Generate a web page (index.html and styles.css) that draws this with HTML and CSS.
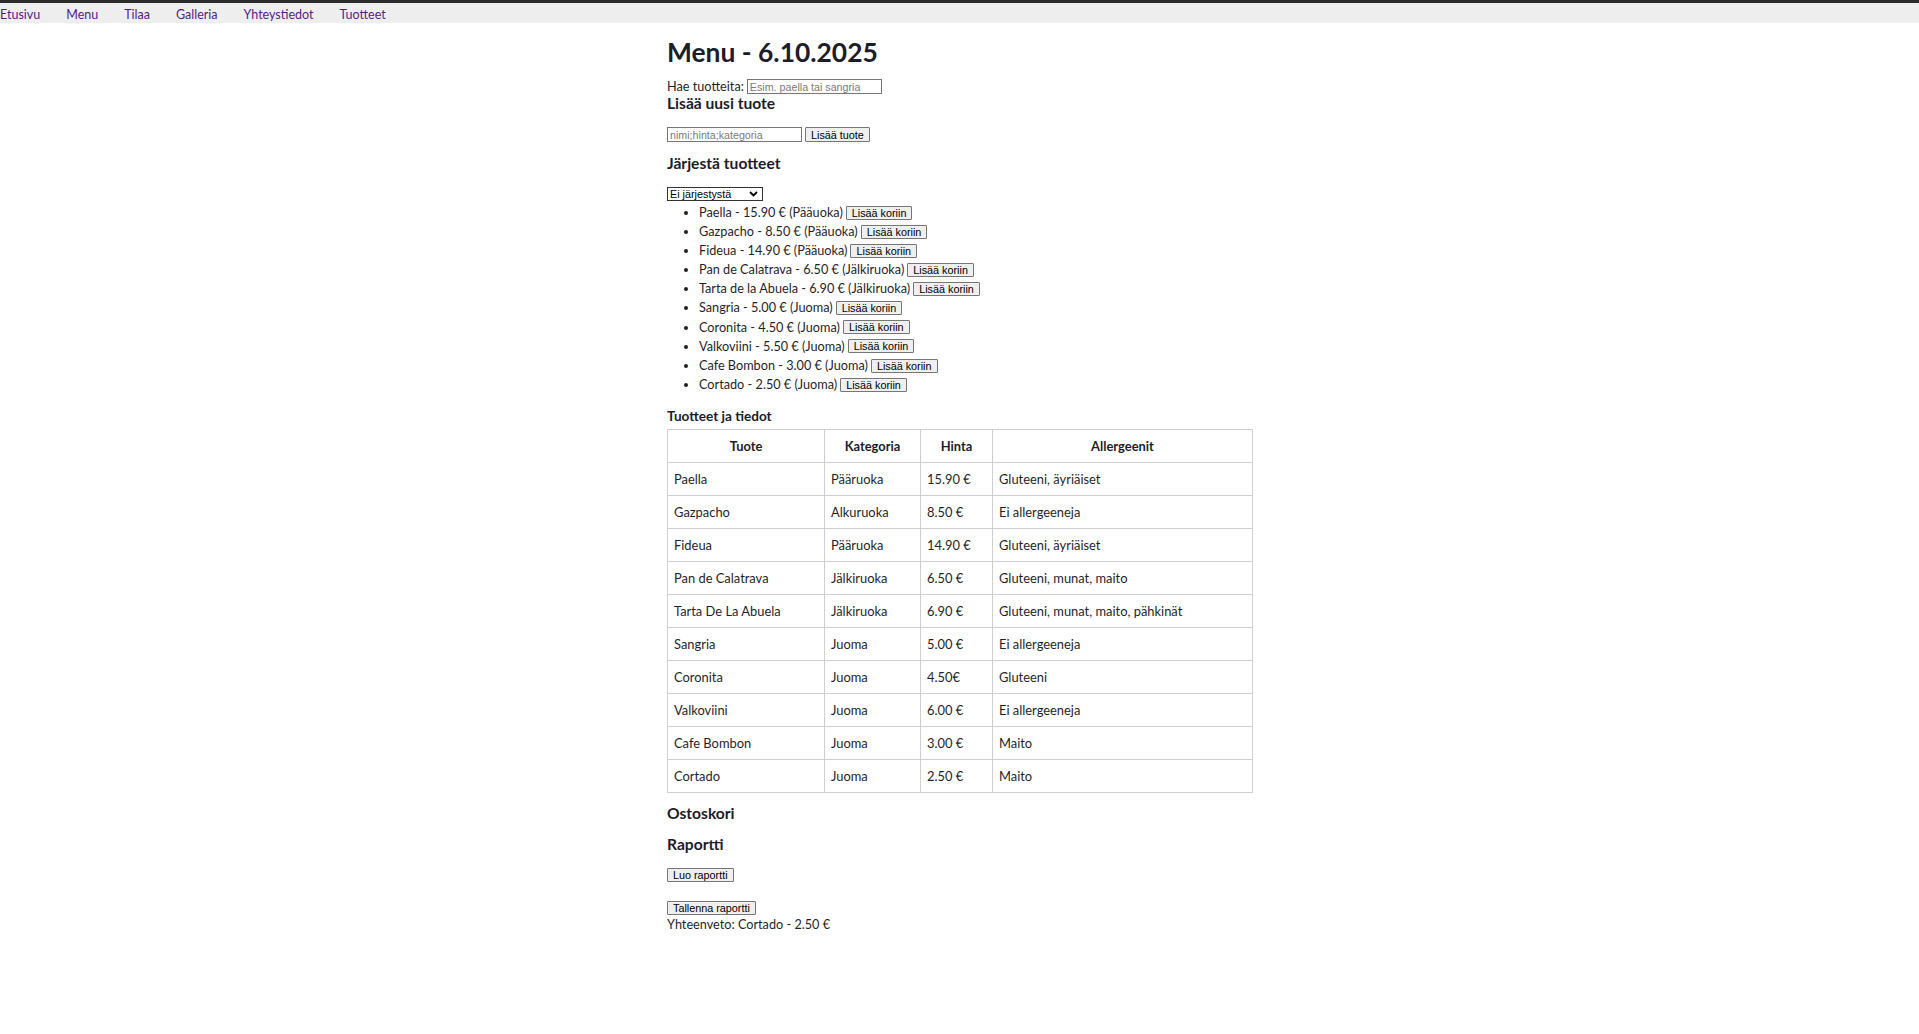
FILE: index.html
```html
<!DOCTYPE html>
<html lang="fi">
<head>
<meta charset="utf-8">
<title>Menu</title>
<link rel="stylesheet" href="styles.css">
</head>
<body>
<nav class="topnav">
  <a href="#" class="nav-link">Etusivu</a>
  <a href="#" class="nav-link">Menu</a>
  <a href="#" class="nav-link">Tilaa</a>
  <a href="#" class="nav-link">Galleria</a>
  <a href="#" class="nav-link">Yhteystiedot</a>
  <a href="#" class="nav-link">Tuotteet</a>
</nav>
<main class="page">
  <h1 class="page-title">Menu - 6.10.2025</h1>
  <div class="search-row">
    <label class="search-label" for="haku">Hae tuotteita:</label>
    <input id="haku" class="field search-field" type="text" placeholder="Esim. paella tai sangria">
  </div>
  <h3 class="section-title first">Lisää uusi tuote</h3>
  <div class="add-row">
    <input class="field add-field" type="text" placeholder="nimi;hinta;kategoria">
    <button class="btn">Lisää tuote</button>
  </div>
  <h3 class="section-title sort-title">Järjestä tuotteet</h3>
  <div class="select-wrap">
    <select class="sort-select">
      <option>Ei järjestystä</option>
      <option>Hinta nouseva</option>
      <option>Hinta laskeva</option>
    </select>
    <svg class="chevron" width="9" height="6" viewBox="0 0 9 6"><path d="M1 1 L4.5 4.5 L8 1" fill="none" stroke="#000" stroke-width="1.8"/></svg>
  </div>
  <ul class="product-list">
    <li class="product"><span>Paella - 15.90 € (Pääuoka)</span><button class="btn">Lisää koriin</button></li>
    <li class="product"><span>Gazpacho - 8.50 € (Pääuoka)</span><button class="btn">Lisää koriin</button></li>
    <li class="product"><span>Fideua - 14.90 € (Pääuoka)</span><button class="btn">Lisää koriin</button></li>
    <li class="product"><span>Pan de Calatrava - 6.50 € (Jälkiruoka)</span><button class="btn">Lisää koriin</button></li>
    <li class="product"><span>Tarta de la Abuela - 6.90 € (Jälkiruoka)</span><button class="btn">Lisää koriin</button></li>
    <li class="product"><span>Sangria - 5.00 € (Juoma)</span><button class="btn">Lisää koriin</button></li>
    <li class="product"><span>Coronita - 4.50 € (Juoma)</span><button class="btn">Lisää koriin</button></li>
    <li class="product"><span>Valkoviini - 5.50 € (Juoma)</span><button class="btn">Lisää koriin</button></li>
    <li class="product"><span>Cafe Bombon - 3.00 € (Juoma)</span><button class="btn">Lisää koriin</button></li>
    <li class="product"><span>Cortado - 2.50 € (Juoma)</span><button class="btn">Lisää koriin</button></li>
  </ul>
  <h4 class="table-caption">Tuotteet ja tiedot</h4>
  <table class="info-table">
    <colgroup>
      <col class="c-name"><col class="c-cat"><col class="c-price"><col class="c-all">
    </colgroup>
    <thead>
      <tr><th>Tuote</th><th>Kategoria</th><th>Hinta</th><th>Allergeenit</th></tr>
    </thead>
    <tbody>
      <tr><td>Paella</td><td>Pääruoka</td><td>15.90 €</td><td>Gluteeni, äyriäiset</td></tr>
      <tr><td>Gazpacho</td><td>Alkuruoka</td><td>8.50 €</td><td>Ei allergeeneja</td></tr>
      <tr><td>Fideua</td><td>Pääruoka</td><td>14.90 €</td><td>Gluteeni, äyriäiset</td></tr>
      <tr><td>Pan de Calatrava</td><td>Jälkiruoka</td><td>6.50 €</td><td>Gluteeni, munat, maito</td></tr>
      <tr><td>Tarta De La Abuela</td><td>Jälkiruoka</td><td>6.90 €</td><td>Gluteeni, munat, maito, pähkinät</td></tr>
      <tr><td>Sangria</td><td>Juoma</td><td>5.00 €</td><td>Ei allergeeneja</td></tr>
      <tr><td>Coronita</td><td>Juoma</td><td>4.50€</td><td>Gluteeni</td></tr>
      <tr><td>Valkoviini</td><td>Juoma</td><td>6.00 €</td><td>Ei allergeeneja</td></tr>
      <tr><td>Cafe Bombon</td><td>Juoma</td><td>3.00 €</td><td>Maito</td></tr>
      <tr><td>Cortado</td><td>Juoma</td><td>2.50 €</td><td>Maito</td></tr>
    </tbody>
  </table>
  <h3 class="section-title cart-title">Ostoskori</h3>
  <h3 class="section-title report-title">Raportti</h3>
  <div class="report-actions">
    <button class="btn">Luo raportti</button>
    <button class="btn save-btn">Tallenna raportti</button>
  </div>
  <p class="summary">Yhteenveto: Cortado - 2.50 €</p>
</main>
</body>
</html>
```
FILE: styles.css
```css
html, body {
  margin: 0;
  padding: 0;
  background: #ffffff;
}

body {
  font-family: Lato, "Open Sans", sans-serif;
  color: #1f1f2b;
  font-size: 12.7px;
}

.topnav {
  display: flex;
  align-items: flex-end;
  height: 20px;
  border-top: 3px solid #2c2c2c;
  background: #eeeeee;
}

.nav-link {
  color: #551a8b;
  text-decoration: none;
  font-size: 12.5px;
  line-height: 17px;
  margin-right: 26px;
}

.page {
  width: 585px;
  margin: 0 auto;
}

.page-title {
  margin: 13px 0 0;
  font-size: 26.4px;
  line-height: 32px;
  font-weight: 700;
  color: #1c1c2a;
}

.search-row {
  display: flex;
  align-items: center;
  gap: 3px;
  height: 15px;
  margin-top: 11px;
}

.search-label {
  font-size: 12.7px;
  line-height: 15px;
}

.field {
  box-sizing: border-box;
  height: 15px;
  border: 1px solid #767676;
  padding: 0 2px;
  font-family: "Liberation Sans", Arial, sans-serif;
  font-size: 10.7px;
  color: #000;
  background: #fff;
  outline: none;
}

.field::placeholder {
  color: #7a7a7a;
}

.search-field {
  width: 135px;
}

.add-field {
  width: 135px;
}

.section-title {
  margin: 0;
  font-size: 15.6px;
  line-height: 18px;
  font-weight: 700;
  color: #1c1c2a;
}

.add-row {
  display: flex;
  align-items: center;
  gap: 3px;
  margin-top: 15px;
}

.sort-title {
  margin-top: 12px;
}

.btn {
  box-sizing: border-box;
  height: 14px;
  padding: 0 5px;
  border: 1px solid #767676;
  border-radius: 1px;
  background: #efefef;
  color: #000;
  font-family: "Liberation Sans", Arial, sans-serif;
  font-size: 10.8px;
  line-height: 12px;
  cursor: pointer;
}

.add-row .btn {
  height: 15px;
}

.select-wrap {
  position: relative;
  width: 96px;
  height: 14px;
  margin-top: 15px;
}

.sort-select {
  appearance: none;
  -webkit-appearance: none;
  box-sizing: border-box;
  width: 96px;
  height: 14px;
  border: 1px solid #333;
  border-radius: 0;
  padding: 0 0 0 2px;
  background: #fff;
  color: #000;
  font-family: "Liberation Sans", Arial, sans-serif;
  font-size: 10.8px;
  line-height: 12px;
  display: block;
}

.chevron {
  position: absolute;
  right: 5px;
  top: 4px;
  pointer-events: none;
}

.product-list {
  margin: 2px 0 0;
  padding-left: 32px;
  list-style: disc;
}

.product {
  height: 19.1px;
  line-height: 19.1px;
  font-size: 12.7px;
}

.product .btn {
  margin-left: 3px;
  vertical-align: middle;
  position: relative;
  top: -1px;
}

.table-caption {
  margin: 14px 0 0;
  font-size: 13.6px;
  line-height: 16px;
  font-weight: 700;
  color: #1c1c2a;
}

.info-table {
  margin-top: 5px;
  width: 585px;
  border-collapse: collapse;
  table-layout: fixed;
  font-size: 12.9px;
}

.c-name { width: 157px; }
.c-cat { width: 96px; }
.c-price { width: 72px; }
.c-all { width: 260px; }

.info-table th,
.info-table td {
  border: 1px solid #cfcfcf;
  height: 33px;
  padding: 0 6px;
  box-sizing: border-box;
  line-height: 16px;
  text-align: left;
  white-space: nowrap;
}

.info-table th {
  text-align: center;
  font-weight: 700;
  color: #1c1c2a;
}

.cart-title {
  margin-top: 11px;
}

.report-title {
  margin-top: 13px;
}

.report-actions {
  display: flex;
  flex-direction: column;
  align-items: flex-start;
  margin-top: 15px;
}

.save-btn {
  margin-top: 19px;
}

.summary {
  margin: 0;
  font-size: 12.7px;
  line-height: 18px;
}
```
